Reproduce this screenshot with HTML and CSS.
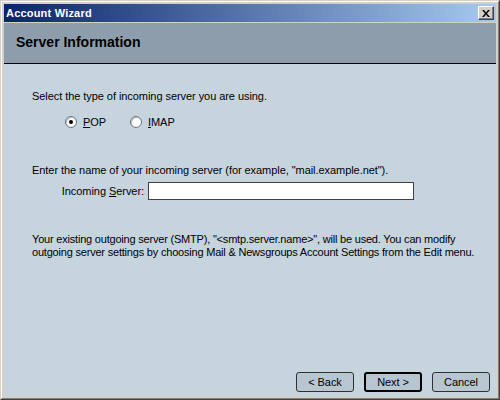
FILE: index.html
```
<!DOCTYPE html>
<html>
<head>
<meta charset="utf-8">
<link rel="stylesheet" href="styles.css">
</head>
<body>
<div class="window">
  <div class="frame">
    <div class="titlebar">
      <span class="title">Account Wizard</span>
      <span class="close"><svg width="8" height="7" viewBox="0 0 8 7"><path d="M0 0h2l2 2.5L6 0h2L5 3.5 8 7H6L4 4.5 2 7H0l3-3.5z" fill="#000"/></svg></span>
    </div>
    <div class="header">Server Information</div>
    <div class="content">
      <p class="line first">Select the type of incoming server you are using.</p>
      <div class="radios">
        <label class="radio"><span class="dot checked"></span><span><u>P</u>OP</span></label>
        <label class="radio"><span class="dot"></span><span><u>I</u>MAP</span></label>
      </div>
      <p class="line second">Enter the name of your incoming server (for example, "mail.example.net").</p>
      <div class="field">
        <span class="field-label">Incoming <u>S</u>erver:</span>
        <span class="input"></span>
      </div>
      <p class="note">Your existing outgoing server (SMTP), "&lt;smtp.server.name&gt;", will be used. You can modify<br>outgoing server settings by choosing Mail &amp; Newsgroups Account Settings from the Edit menu.</p>
      <div class="spacer"></div>
      <div class="buttons">
        <span class="btn">&lt; Back</span>
        <span class="btn default">Next &gt;</span>
        <span class="btn">Cancel</span>
      </div>
    </div>
  </div>
</div>
</body>
</html>
```
FILE: styles.css
```
html, body {
  margin: 0;
  padding: 0;
}
body {
  width: 500px;
  height: 400px;
  overflow: hidden;
  font-family: "Liberation Sans", Arial, sans-serif;
  font-size: 11px;
  letter-spacing: -0.06px;
  color: #000;
}
.window {
  box-sizing: border-box;
  width: 500px;
  height: 400px;
  background: #d4d0c8;
  border: 1px solid;
  border-color: #d4d0c8 #404040 #404040 #d4d0c8;
}
.frame {
  box-sizing: border-box;
  height: 100%;
  border: 1px solid;
  border-color: #ffffff #808080 #808080 #ffffff;
  padding: 2px;
  display: flex;
  flex-direction: column;
}
.titlebar {
  height: 18px;
  flex: none;
  background: linear-gradient(to right, #0a246a, #a6caf0);
  display: flex;
  align-items: center;
  justify-content: space-between;
  padding: 0 2px;
}
.title {
  color: #fff;
  font-weight: bold;
  font-size: 11px;
  letter-spacing: 0.2px;
}
.close {
  box-sizing: border-box;
  width: 16px;
  height: 14px;
  background: #d4d0c8;
  border: 1px solid;
  border-color: #ffffff #404040 #404040 #ffffff;
  box-shadow: inset -1px -1px 0 #808080;
  display: flex;
  align-items: center;
  justify-content: center;
}
.header {
  flex: none;
  margin-top: 1px;
  height: 41px;
  box-sizing: border-box;
  background: #8e9dab;
  border-bottom: 1px solid #000;
  font-weight: bold;
  font-size: 14px;
  letter-spacing: 0;
  padding: 11px 0 0 12px;
}
.content {
  flex: 1;
  background: #c6d4de;
  display: flex;
  flex-direction: column;
  padding: 0 0 0 28px;
}
.line {
  margin: 0;
  line-height: 13px;
}
.first {
  margin-top: 26px;
}
.radios {
  display: flex;
  gap: 15px;
  margin: 12px 0 0 33px;
}
.radio {
  display: flex;
  align-items: center;
  gap: 6px;
  height: 14px;
}
.radio span:last-child {
  min-width: 32px;
}
.dot {
  box-sizing: border-box;
  width: 12px;
  height: 12px;
  border-radius: 50%;
  background: #ffffff;
  border: 1px solid #6a7480;
  box-shadow: inset 1px 1px 0 #c0c0c0;
  display: flex;
  align-items: center;
  justify-content: center;
}
.dot.checked::after {
  content: "";
  width: 4px;
  height: 4px;
  border-radius: 50%;
  background: #000;
}
u {
  text-decoration: underline;
  text-underline-offset: 1px;
}
.second {
  margin-top: 35px;
}
.field {
  display: flex;
  align-items: center;
  margin-top: 5px;
}
.field-label {
  width: 112px;
  text-align: right;
  padding-right: 4px;
}
.input {
  box-sizing: border-box;
  width: 266px;
  height: 18px;
  background: #fff;
  border: 1px solid #404040;
}
.note {
  margin: 33px 0 0 0;
  line-height: 13px;
  letter-spacing: -0.2px;
  white-space: nowrap;
}
.spacer {
  flex: 1;
}
.buttons {
  display: flex;
  justify-content: flex-end;
  gap: 10px;
  padding: 0 6px 4px 0;
}
.btn {
  box-sizing: border-box;
  width: 58px;
  height: 20px;
  border: 1px solid #303030;
  border-radius: 3px;
  background: #b8c6d2;
  display: flex;
  align-items: center;
  justify-content: center;
}
.btn.default {
  border: 2px solid #000;
}
```
